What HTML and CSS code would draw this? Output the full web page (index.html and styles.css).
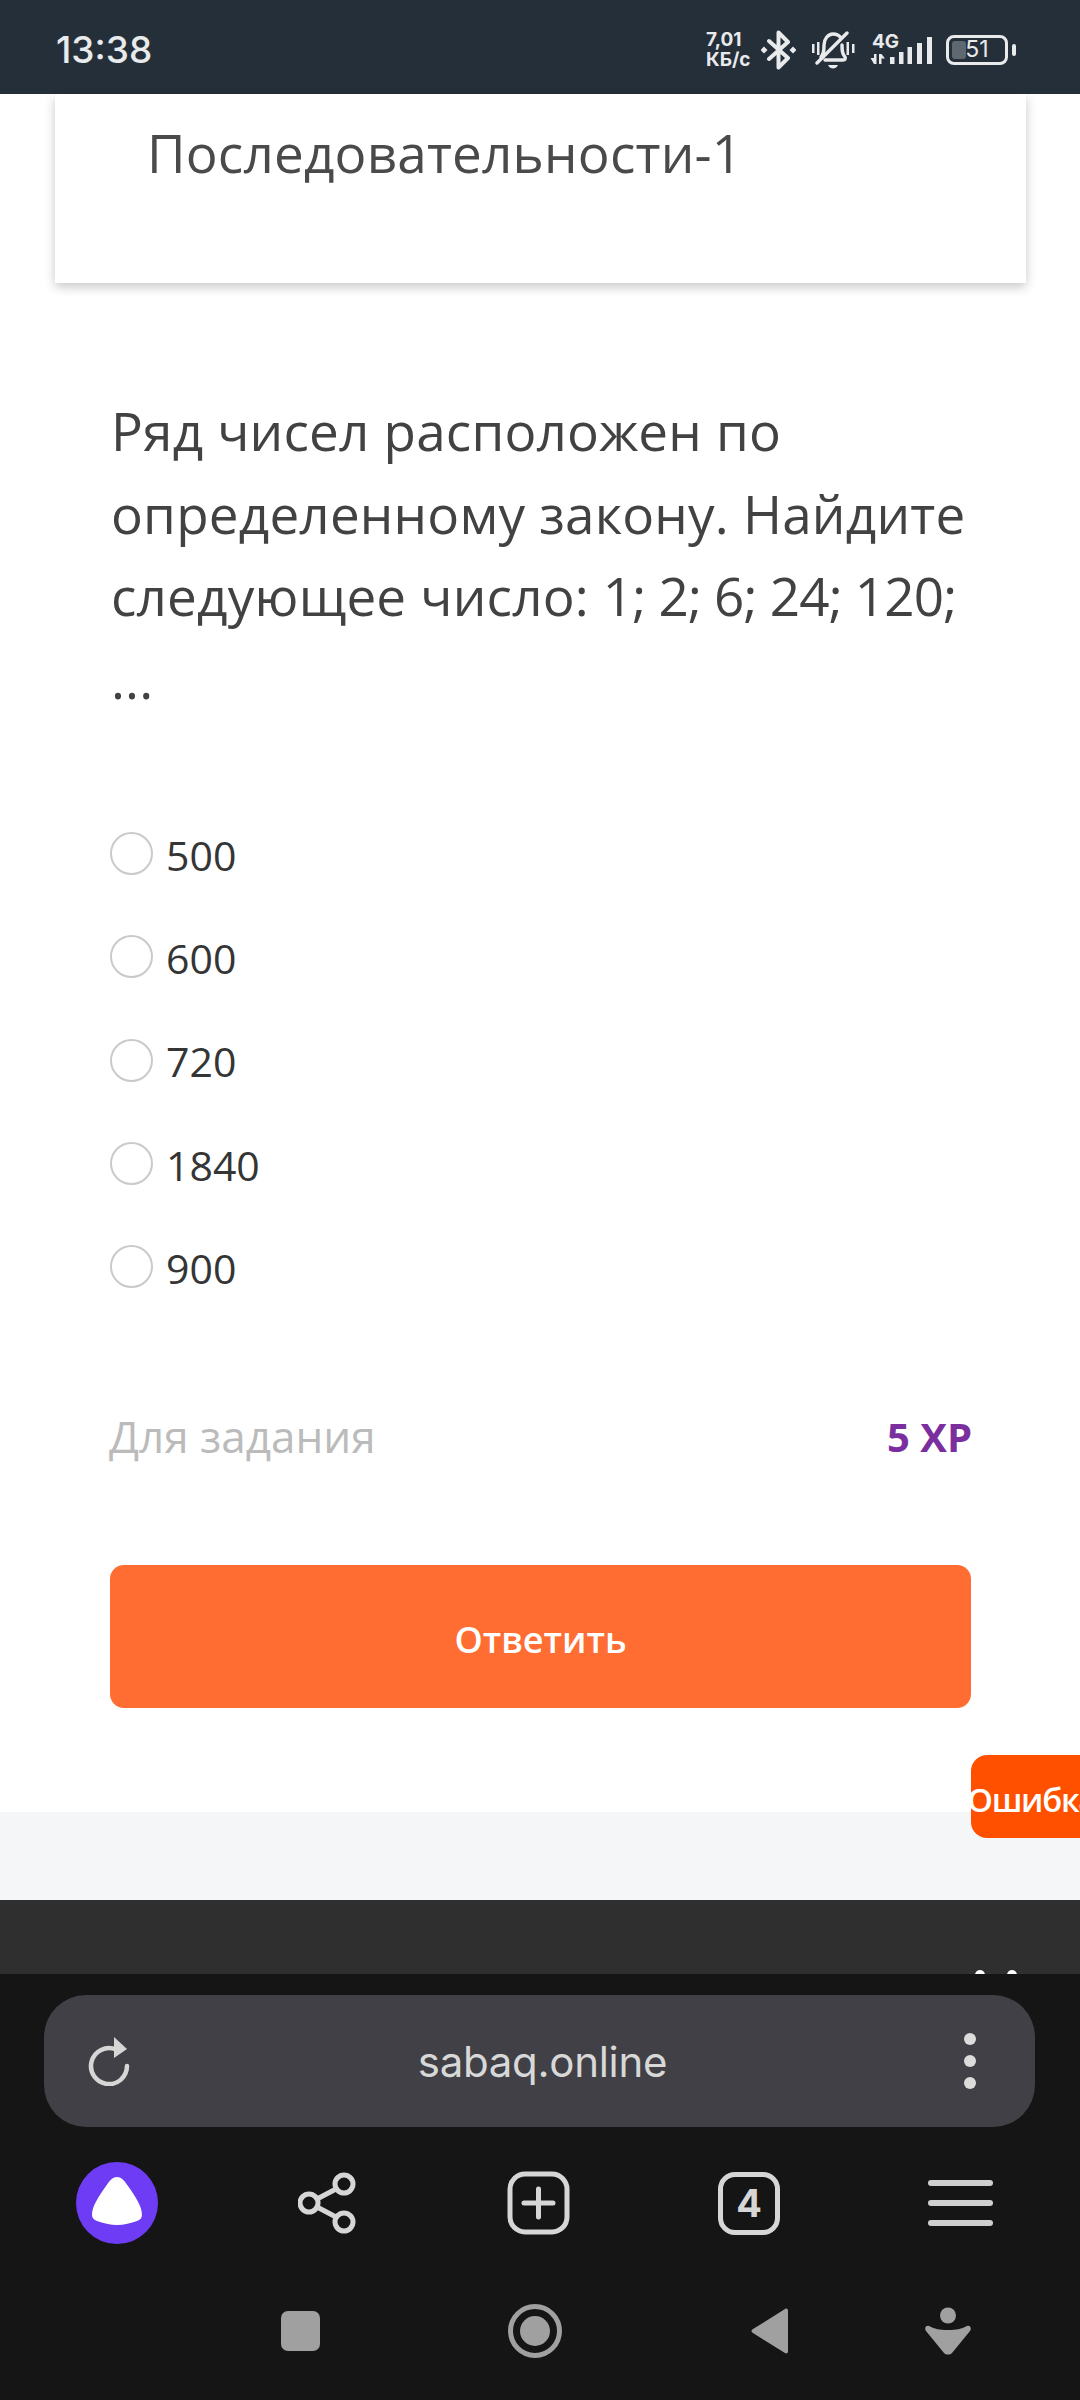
FILE: index.html
```html
<!DOCTYPE html>
<html lang="ru">
<head>
<meta charset="utf-8">
<title>Последовательности-1</title>
<link rel="stylesheet" href="styles.css">
</head>
<body>
<div class="screen">
  <header class="status">
    <span class="time">13:38</span>
    <div class="status-icons">
      <span class="speed">7,01<br>КБ/с</span>
      <svg class="bt" width="35" height="40" viewBox="0 0 35 40"><path d="M8 11 27 28 17.5 37.5V2.5L27 12 8 29" fill="none" stroke="#e8eaec" stroke-width="4" stroke-linejoin="round" stroke-linecap="round"/><path d="M3 16.5 6.500 20 3 23.500-.5 20ZM32 16.500 35.500 20 32 23.500 28.500 20Z" fill="#e8eaec"/></svg>
      <svg class="bell" width="44" height="38" viewBox="0 0 44 38"><path d="M10 26c3-3 3-7 3-12 0-6 4-11 9-11 3 0 6 1 8 4M31 14c0 5 0 9 3 12 1 2 0 3-2 3H14" fill="none" stroke="#e8eaec" stroke-width="3.400" stroke-linecap="round"/><path d="M36 2 6 32" stroke="#e8eaec" stroke-width="3.400" stroke-linecap="round"/><path d="M17 34h10c-1 2.500-3 3.500-5 3.500s-4-1-5-3.500ZM1 13h2.500v9H1ZM6 11h2.500v13H6ZM35.500 11H38v13h-2.500ZM41 13h2.500v9H41Z" fill="#e8eaec"/></svg>
      <div class="signal">
        <span class="net">4G</span>
        <svg class="bars" width="63" height="35" viewBox="0 0 63 35"><path d="M4 22h2.500v10H4ZM.5 26H4v6ZM9 22h2.500l3.500 4.500h-3.500V32H9Z" fill="#e8eaec"/><path d="M20 25h4.500v7H20ZM29 20h4.500v12H29ZM37.500 15H42v17h-4.500ZM47 11h5v21h-5ZM57 5h5v27h-5Z" fill="#e8eaec"/></svg>
      </div>
      <div class="battery">
        <div class="battery-body"><span class="battery-fill"></span><span class="battery-num">51</span></div>
        <span class="battery-tip"></span>
      </div>
    </div>
  </header>

  <main class="content">
    <section class="card"><h1 class="card-title">Последовательности-1</h1></section>
    <p class="question">Ряд чисел расположен по определенному закону. Найдите следующее число: <span class="nums">1; 2; 6; 24; 120;</span> ...</p>
    <ul class="options">
      <li class="option"><span class="radio"></span><span class="option-text">500</span></li>
      <li class="option"><span class="radio"></span><span class="option-text">600</span></li>
      <li class="option"><span class="radio"></span><span class="option-text">720</span></li>
      <li class="option"><span class="radio"></span><span class="option-text">1840</span></li>
      <li class="option"><span class="radio"></span><span class="option-text">900</span></li>
    </ul>
    <div class="meta"><span class="meta-label">Для задания</span><span class="meta-xp">5 XP</span></div>
    <button class="answer">Ответить</button>
  </main>
  <div class="band"></div>
  <footer class="footer"><span class="tip tip-a"></span><span class="tip tip-b"></span></footer>

  <div class="error-tab"><span class="error-text">Ошибка</span></div>

  <nav class="chrome">
    <div class="urlbar">
      <svg class="reload" width="44" height="50" viewBox="0 0 44 50"><path d="M28 13.500A18 18 0 1 0 39 30" fill="none" stroke="#d6d6d6" stroke-width="4.500" stroke-linecap="round"/><path d="M26 1 39 13 26 22Z" fill="#d6d6d6"/></svg>
      <span class="url">sabaq.online</span>
      <svg class="more" width="14" height="58" viewBox="0 0 14 58"><circle cx="7" cy="7" r="6" fill="#dcdcdc"/><circle cx="7" cy="29" r="6" fill="#dcdcdc"/><circle cx="7" cy="51" r="6" fill="#dcdcdc"/></svg>
    </div>
    <div class="toolbar">
      <svg class="alice" width="82" height="82" viewBox="0 0 82 82"><circle cx="41" cy="41" r="41" fill="#6f3cf6"/><path d="M41 15c4 0 7 3 11 9 7 10 14 20 14 29 0 3-2 5-5 6-6 2-13 4-20 4s-14-2-20-4c-3-1-5-3-5-6 0-9 7-19 14-29 4-6 7-9 11-9Z" fill="#fff"/></svg>
      <svg class="share" width="60" height="62" viewBox="0 0 60 62"><g fill="none" stroke="#d6d6d6" stroke-width="5"><circle cx="46" cy="12" r="9"/><circle cx="11" cy="31" r="9"/><circle cx="46" cy="50" r="9"/><path d="M38 17 19 27M19 35l19 10"/></g></svg>
      <svg class="plus" width="63" height="64" viewBox="0 0 63 64"><rect x="3" y="3" width="57" height="58" rx="15" fill="none" stroke="#d6d6d6" stroke-width="5"/><path d="M31.500 18v28M17 32h29" stroke="#d6d6d6" stroke-width="5" stroke-linecap="round"/></svg>
      <div class="tabs">4</div>
      <div class="menu"><span class="menu-line"></span><span class="menu-line"></span><span class="menu-line"></span></div>
    </div>
    <div class="sysnav">
      <span class="nav-square"></span>
      <span class="nav-circle"><span class="nav-dot"></span></span>
      <svg class="nav-back" width="38" height="46" viewBox="0 0 38 46"><path d="M34 1c2-1 3 0 3 2v40c0 2-1 3-3 2L2 25c-2-1-2-3 0-4Z" fill="#a0a0a0"/></svg>
      <svg class="nav-person" width="46" height="48" viewBox="0 0 46 48"><ellipse cx="23" cy="8.500" rx="8" ry="8" fill="#a0a0a0"/><path d="M4 19c6 3 10 4 19 4s13-1 19-4c3-1 5 2 3 5L27 46c-2 2-6 2-8 0L1 24c-2-3 0-6 3-5Z" fill="#a0a0a0"/></svg>
    </div>
  </nav>
</div>
</body>
</html>
```

FILE: styles.css
```css
* { box-sizing: border-box; }
html, body { margin: 0; padding: 0; background: #fff; }
.screen { position: relative; width: 1080px; height: 2400px; overflow: hidden; display: flex; flex-direction: column; font-family: "Open Sans", "Noto Sans", sans-serif; }

.status { height: 94px; background: #252f39; color: #e8eaec; display: flex; align-items: center; justify-content: space-between; padding: 5px 64px 0 56px; flex: none; }
.time { font-family: Inter, sans-serif; font-size: 37px; font-weight: 500; line-height: 1; }
.status-icons { display: flex; align-items: center; }
.speed { font-family: Inter, sans-serif; font-size: 19px; line-height: 20px; font-weight: 700; width: 44px; margin-right: 11px; white-space: nowrap; }
.bt { margin-right: 15px; }
.bell { margin-right: 15px; }
.signal { margin-right: 13px; position: relative; width: 63px; height: 35px; }
.bars { display: block; }
.net { position: absolute; left: 2px; top: 0; font-family: Inter, sans-serif; font-size: 19px; line-height: 19px; font-weight: 700; color: #e8eaec; }
.battery { display: flex; align-items: center; gap: 4px; }
.battery-body { position: relative; width: 62px; height: 30px; border: 3px solid #e8eaec; border-radius: 8px; display: flex; align-items: center; justify-content: center; }
.battery-fill { position: absolute; left: 3px; top: 3px; bottom: 3px; width: 14px; background: #5f6870; border-radius: 3px; }
.battery-num { position: relative; font-family: Inter, sans-serif; font-size: 23px; line-height: 1; }
.battery-tip { width: 4px; height: 12px; background: #e8eaec; border-radius: 2px; }

.content { background: #fff; height: 1718px; flex: none; display: flex; flex-direction: column; }
.card { margin: 0 54px 0 55px; height: 189px; background: #fff; box-shadow: 0 4px 10px rgba(0,0,0,.22); padding: 21px 0 0 92px; flex: none; }
.card-title { margin: 0; font-size: 53px; font-weight: 400; line-height: 76px; letter-spacing: .2px; color: #4a4a4a; white-space: nowrap; }
.question { margin: 107px 88px 0 111px; font-size: 53px; line-height: 82.500px; letter-spacing: .2px; color: #424242; }
.nums { letter-spacing: -.8px; }
.options { list-style: none; margin: 82px 0 0 110px; padding: 0; }
.option { height: 103.300px; display: flex; align-items: center; gap: 13px; }
.radio { width: 43px; height: 43px; border: 2px solid #cacaca; border-radius: 50%; flex: none; }
.option-text { font-size: 41px; line-height: 50px; color: #353535; position: relative; top: 1px; }
.meta { margin: 88px 108px 0 109px; display: flex; justify-content: space-between; align-items: center; height: 60px; }
.meta-label { font-size: 44px; color: #bbb; }
.meta-xp { font-size: 40px; font-weight: 700; color: #7b2f9e; }
.answer { margin: 99px 109px 0 110px; height: 143px; border: 0; border-radius: 14px; background: #ff6d33; color: #fff; font: 600 36px "Open Sans", sans-serif; padding: 6px 0 0; flex: none; }

.band { height: 88px; background: #f5f6f8; flex: none; }
.footer { height: 74px; background: #2f2f2f; position: relative; flex: none; overflow: hidden; }
.tip { position: absolute; top: 70px; width: 10px; height: 10px; border-radius: 50%; background: #fff; }
.tip-a { left: 975px; }
.tip-b { left: 1007px; }

.error-tab { position: absolute; left: 971px; top: 1755px; width: 109px; height: 83px; background: #ff5000; border-radius: 16px 0 0 16px; }
.error-text { position: absolute; left: -4px; top: 23px; font-size: 33px; line-height: 44px; font-weight: 600; letter-spacing: -1.300px; color: #fff; white-space: nowrap; }

.chrome { flex: 1; background: #151515; padding-top: 21px; display: flex; flex-direction: column; }
.urlbar { margin: 0 45px 0 44px; height: 132px; border-radius: 42px; background: #404046; display: flex; align-items: center; padding: 0 58px 0 44px; position: relative; justify-content: space-between; }
.url { font-family: Inter, sans-serif; font-size: 42px; color: #d8d8d8; letter-spacing: -.3px; }
.more { margin-left: 10px; }
.toolbar { display: flex; align-items: center; height: 82px; margin-top: 35px; padding-left: 76px; }
.share { margin-left: 140px; }
.plus { margin-left: 149px; }
.tabs { margin-left: 148px; width: 62px; height: 63px; border: 5px solid #d6d6d6; border-radius: 17px; color: #d6d6d6; font: 700 38px/53px Inter, sans-serif; text-align: center; }
.menu { margin-left: 148px; width: 65px; display: flex; flex-direction: column; gap: 14px; }
.menu-line { height: 6px; background: #cfcfcf; border-radius: 3px; }
.sysnav { display: flex; align-items: center; height: 54px; margin-top: 60px; padding-left: 281px; }
.nav-square { width: 39px; height: 40px; background: #a0a0a0; border-radius: 7px; }
.nav-circle { margin-left: 188px; width: 54px; height: 54px; border: 5px solid #a0a0a0; border-radius: 50%; display: flex; align-items: center; justify-content: center; }
.nav-dot { width: 30px; height: 30px; background: #a0a0a0; border-radius: 50%; }
.nav-back { margin-left: 189px; }
.nav-person { margin-left: 136px; }
```
